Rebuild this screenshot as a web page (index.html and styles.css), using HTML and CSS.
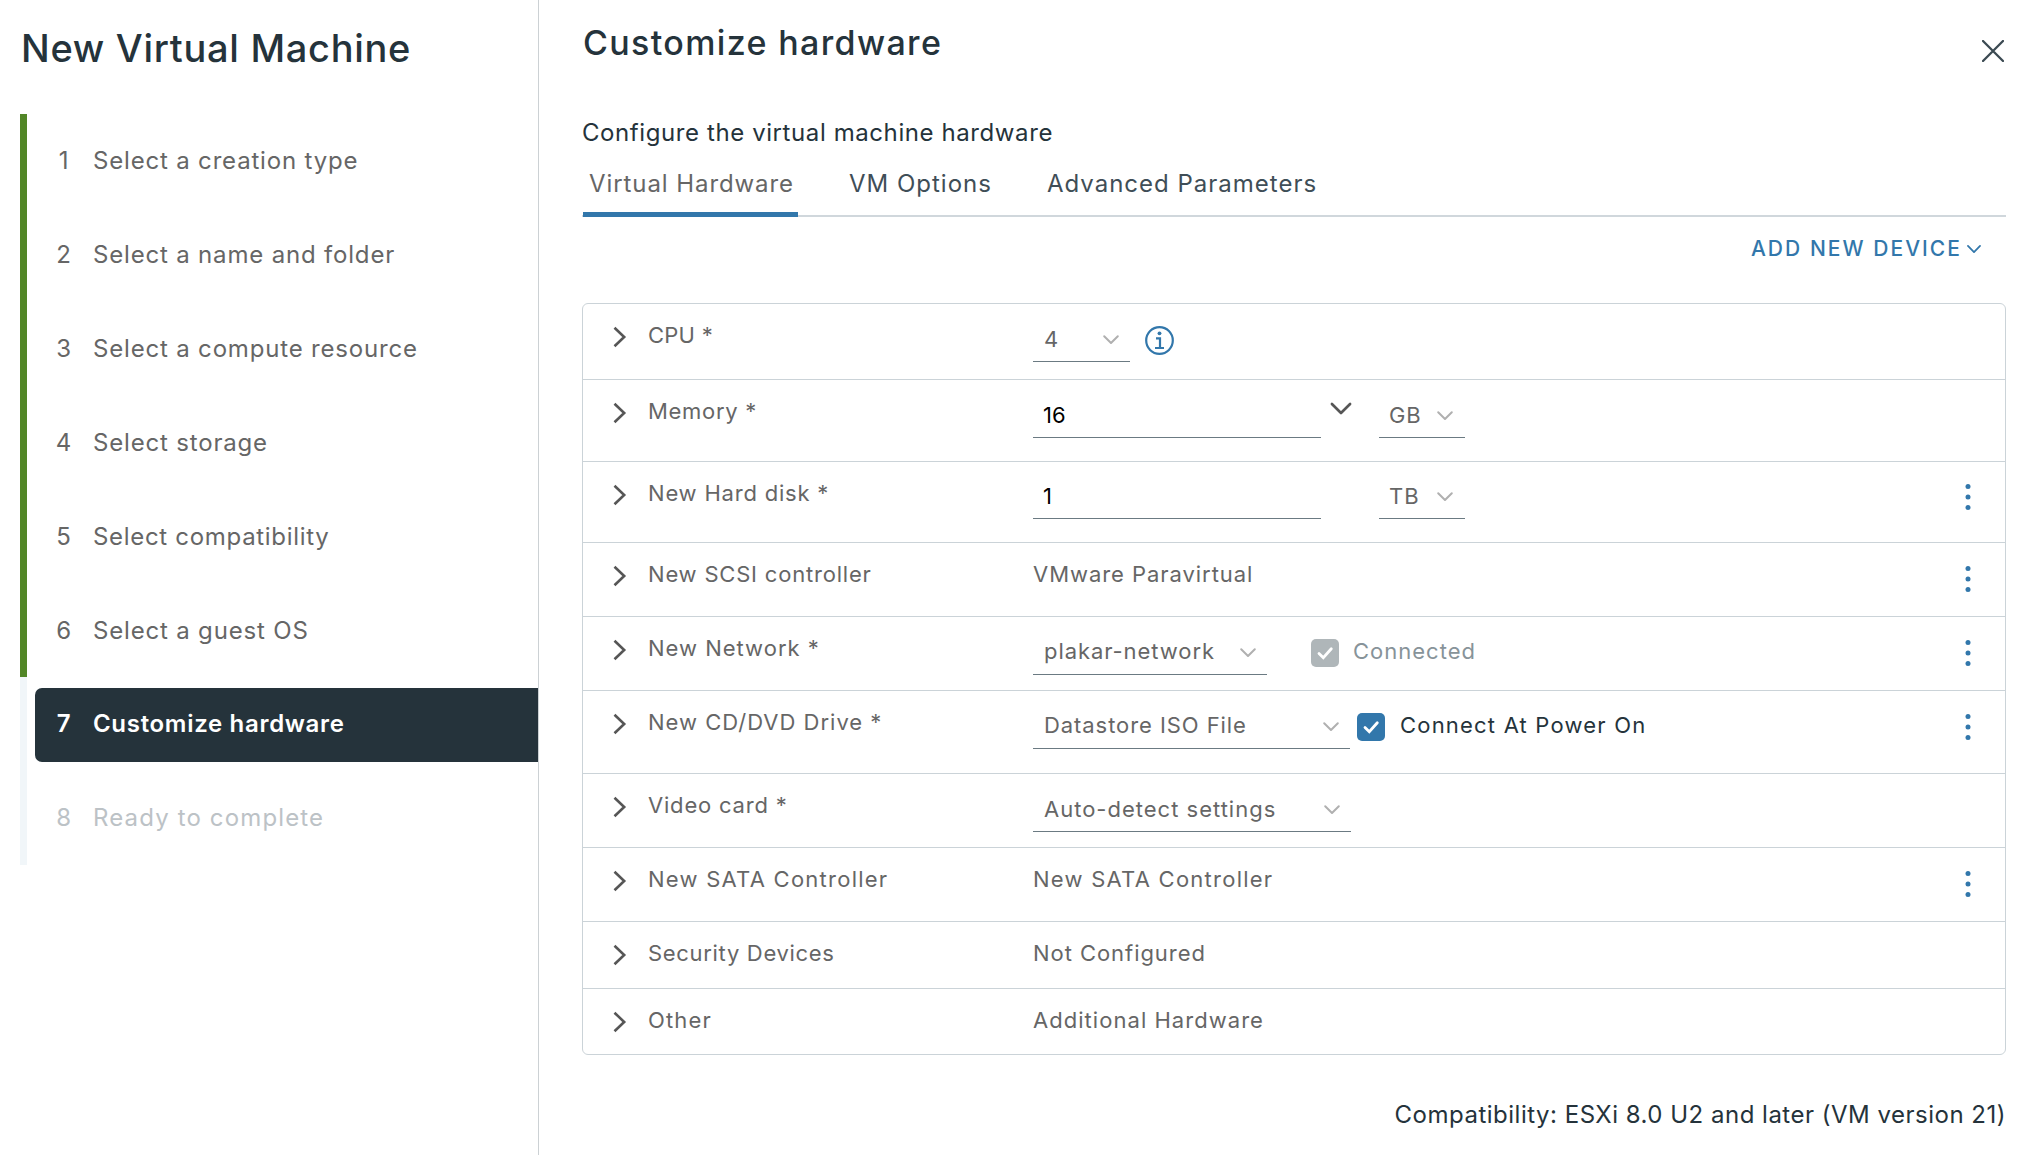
FILE: index.html
```html
<!DOCTYPE html>
<html lang="en">
<head>
<meta charset="utf-8">
<title>New Virtual Machine</title>
<link rel="stylesheet" href="styles.css">
</head>
<body>
<svg class="sprite" aria-hidden="true">
  <symbol id="right" viewBox="0 0 14 22"><path d="M1.500 1.700l9.700 9.300-9.700 9.300" fill="none" stroke="currentColor" stroke-width="2.600"/></symbol>
  <symbol id="down" viewBox="0 0 18 12"><path d="M2.200 2.200L9 9l6.800-6.800" fill="none" stroke="currentColor" stroke-width="2" stroke-linecap="round" stroke-linejoin="round"/></symbol>
  <symbol id="dots" viewBox="0 0 6 28"><circle cx="3" cy="3.500" r="2.500"/><circle cx="3" cy="14" r="2.500"/><circle cx="3" cy="24.500" r="2.500"/></symbol>
  <symbol id="check" viewBox="0 0 28 28"><path d="M8 14.500l4.300 4.300 8-9" fill="none" stroke="#fff" stroke-width="2.800" stroke-linecap="round"/></symbol>
</svg>
<div class="wizard">
  <aside class="sidebar">
    <h1 class="wizard-title">New Virtual Machine</h1>
    <ol class="steps">
      <li class="step"><div class="step-box"><span class="num">1</span><span>Select a creation type</span></div></li>
      <li class="step"><div class="step-box"><span class="num">2</span><span>Select a name and folder</span></div></li>
      <li class="step"><div class="step-box"><span class="num">3</span><span>Select a compute resource</span></div></li>
      <li class="step"><div class="step-box"><span class="num">4</span><span>Select storage</span></div></li>
      <li class="step"><div class="step-box"><span class="num">5</span><span class="ls-70">Select compatibility</span></div></li>
      <li class="step"><div class="step-box"><span class="num">6</span><span>Select a guest OS</span></div></li>
      <li class="step active"><div class="step-box"><span class="num">7</span><span class="ls-70">Customize hardware</span></div></li>
      <li class="step pending"><div class="step-box"><span class="num">8</span><span class="ls-115">Ready to complete</span></div></li>
    </ol>
  </aside>
  <main class="content">
    <header class="page-head">
      <h2 class="page-title">Customize hardware</h2>
      <svg class="close" viewBox="0 0 22 22"><path d="M1 1l20 20M21 1L1 21" fill="none" stroke="currentColor" stroke-width="2.300" stroke-linecap="round"/></svg>
    </header>
    <p class="intro">Configure the virtual machine hardware</p>
    <nav class="tabs">
      <span class="tab selected">Virtual Hardware</span>
      <span class="tab">VM Options</span>
      <span class="tab">Advanced Parameters</span>
    </nav>
    <div class="toolbar"><span>ADD NEW DEVICE</span><svg class="add-caret"><use href="#down"/></svg></div>
    <section class="devices">
      <div class="row h76"><svg class="chev"><use href="#right"/></svg><span class="label ls-25">CPU *</span>
        <div class="value"><span class="select w97">4<svg class="caret"><use href="#down"/></svg></span>
          <svg class="info" viewBox="0 0 29 29"><circle cx="14.500" cy="14.500" r="13.300" fill="none" stroke="currentColor" stroke-width="2.200"/><circle cx="14.500" cy="7.300" r="1.900" fill="currentColor"/><path d="M11 12.400h4v9.300M10 22h9" fill="none" stroke="currentColor" stroke-width="2.200"/></svg></div></div>
      <div class="row h82"><svg class="chev"><use href="#right"/></svg><span class="label ls-70">Memory *</span>
        <div class="value"><span class="input">16</span><svg class="combo"><use href="#down"/></svg><span class="select unit">GB<svg class="caret"><use href="#down"/></svg></span></div></div>
      <div class="row h81"><svg class="chev"><use href="#right"/></svg><span class="label ls-80">New Hard disk *</span>
        <div class="value tight"><span class="input">1</span><span class="select unit alone">TB<svg class="caret"><use href="#down"/></svg></span></div><svg class="more up"><use href="#dots"/></svg></div>
      <div class="row h74"><svg class="chev"><use href="#right"/></svg><span class="label ls-80">New SCSI controller</span>
        <div class="value plain ls-95">VMware Paravirtual</div><svg class="more"><use href="#dots"/></svg></div>
      <div class="row h74"><svg class="chev"><use href="#right"/></svg><span class="label ls-100">New Network *</span>
        <div class="value"><span class="select raised w234">plakar-network<svg class="caret"><use href="#down"/></svg></span><span class="check off ls-100"><svg class="box"><use href="#check"/></svg>Connected</span></div><svg class="more"><use href="#dots"/></svg></div>
      <div class="row h83"><svg class="chev"><use href="#right"/></svg><span class="label ls-100">New CD/DVD Drive *</span>
        <div class="value"><span class="select raised w317">Datastore ISO File<svg class="caret"><use href="#down"/></svg></span><span class="check on ls-120"><svg class="box"><use href="#check"/></svg>Connect At Power On</span></div><svg class="more"><use href="#dots"/></svg></div>
      <div class="row h74"><svg class="chev"><use href="#right"/></svg><span class="label ls-80">Video card *</span>
        <div class="value"><span class="select w318 ls-100">Auto-detect settings<svg class="caret"><use href="#down"/></svg></span></div></div>
      <div class="row h74"><svg class="chev"><use href="#right"/></svg><span class="label ls-125">New SATA Controller</span>
        <div class="value plain ls-125">New SATA Controller</div><svg class="more"><use href="#dots"/></svg></div>
      <div class="row h67"><svg class="chev"><use href="#right"/></svg><span class="label ls-70">Security Devices</span>
        <div class="value plain ls-95">Not Configured</div></div>
      <div class="row h66"><svg class="chev"><use href="#right"/></svg><span class="label ls-115">Other</span>
        <div class="value plain ls-105">Additional Hardware</div></div>
    </section>
    <footer class="compat">Compatibility: ESXi 8.0 U2 and later (VM version 21)</footer>
  </main>
</div>
</body>
</html>
```
FILE: styles.css
```css
* { box-sizing: border-box; }
body { margin: 0; background: #fff; color: #25333b; font-family: Inter, "Liberation Sans", sans-serif; font-size: 24px; line-height: 30px; white-space: nowrap; }
h1, h2, p, ol { margin: 0; padding: 0; }
svg { display: block; flex: none; }
.sprite { display: none; }
.wizard { display: flex; height: 1155px; overflow: hidden; }

/* Wizard steps */
.sidebar { width: 539px; flex: none; border-right: 1px solid #ccd1d4; }
.wizard-title { height: 114px; padding: 25px 0 0 21px; font-size: 38px; line-height: 46px; font-weight: 500; letter-spacing: 0.7px; }
.steps { list-style: none; padding-left: 20px; color: #666; letter-spacing: 0.82px; }
.step { height: 93.9px; padding: 10.7px 0 9px 8px; border-left: 7px solid #528627; }
.step-box { display: flex; height: 74px; padding: 21.4px 0 0 17px; border-radius: 7px 0 0 7px; }
.num { width: 24px; margin-right: 17px; text-align: center; }
.active, .pending { border-left-color: #f1f6f9; }
.active .step-box { background: #25333b; color: #fff; font-weight: 600; }
.pending { color: #bcc2c6; }

/* Page header and tabs */
.content { flex: 1; padding: 0 24px 0 43px; }
.page-head { display: flex; justify-content: space-between; height: 117px; padding-top: 22px; }
.page-title { padding-left: 1px; font-size: 34px; line-height: 42px; font-weight: 500; letter-spacing: 1.35px; }
.close { width: 22px; height: 22px; margin: 18px 2.5px 0 0; color: #3b4a52; }
.intro { height: 50px; padding-top: 1px; letter-spacing: 0.59px; }
.tabs { display: flex; gap: 45px; height: 50px; padding-left: 1px; border-bottom: 2px solid #d0d7dc; color: #3f4e57; letter-spacing: 1px; }
.tab { height: 50px; padding: 2px 4px 0 6px; }
.selected { border-bottom: 5px solid #3277ab; color: #666; letter-spacing: 0.92px; }
.toolbar { display: flex; height: 86px; padding: 17px 24px 0 0; justify-content: flex-end; color: #3277ab; font-size: 21px; font-weight: 500; letter-spacing: 2.04px; }
.add-caret { width: 16px; height: 10.7px; margin: 10px 0 0 4px; }

/* Device list */
.devices { border: 1px solid #cbd3d8; border-radius: 6px; font-size: 22px; line-height: 24px; color: #666; }
.row { display: flex; border-bottom: 1px solid #cbd3d8; }
.row:last-child { border-bottom: 0; }
.h66 { height: 65px; }
.h67 { height: 67px; }
.h74 { height: 74px; }
.h76 { height: 76px; }
.h81 { height: 81px; }
.h82 { height: 82px; }
.h83 { height: 83px; }
.chev { width: 14px; height: 22px; margin: 22.3px 21.5px 0 29.5px; color: #565656; }
.label { width: 385px; padding-top: 19px; }
.value { display: flex; flex: 1; padding-top: 23px; align-items: flex-start; }
.plain { padding-top: 19px; }
.tight { padding-top: 22px; }
.select, .input { display: flex; height: 35px; border-bottom: 1px solid #6b7a82; }
.select { justify-content: space-between; padding: 0 10px 0 11px; letter-spacing: 0.93px; }
.input { width: 288px; padding-left: 10px; color: #000; }
.unit { width: 86px; padding: 0 11px 0 10px; }
.alone { margin-left: 58px; }
.w97 { width: 97px; }
.w234 { width: 234px; }
.w317 { width: 317px; }
.w318 { width: 318px; }
.caret { width: 18px; height: 12px; margin-top: 7px; color: #b0b0b0; }
.raised { line-height: 22px; }
.combo { width: 24px; height: 16px; margin: -2px 26px 0 8px; color: #565656; }
.info { width: 29px; height: 29px; margin: -1px 0 0 15px; color: #3277ab; }
.check { display: flex; gap: 14px; line-height: 22px; }
.box { width: 28px; height: 28px; margin-top: -1px; border-radius: 5px; background: #3277ab; }
.off { margin-left: 44px; color: #879399; }
.off .box { background: #afb6b9; }
.on { margin-left: 7px; gap: 15px; color: #25333b; }
.more { width: 6px; height: 28px; margin: 22px 34.5px 0 0; fill: #3277ab; }
.up { margin-top: 21px; }
.compat { padding-top: 45px; text-align: right; letter-spacing: 0.5px; }

/* Tracking */
.ls-25 { letter-spacing: 0.25px; }
.ls-70 { letter-spacing: 0.69px; }
.ls-80 { letter-spacing: 0.8px; }
.ls-95 { letter-spacing: 0.95px; }
.ls-100 { letter-spacing: 1px; }
.ls-105 { letter-spacing: 1.04px; }
.ls-115 { letter-spacing: 1.14px; }
.ls-120 { letter-spacing: 1.2px; }
.ls-125 { letter-spacing: 1.25px; }
```
